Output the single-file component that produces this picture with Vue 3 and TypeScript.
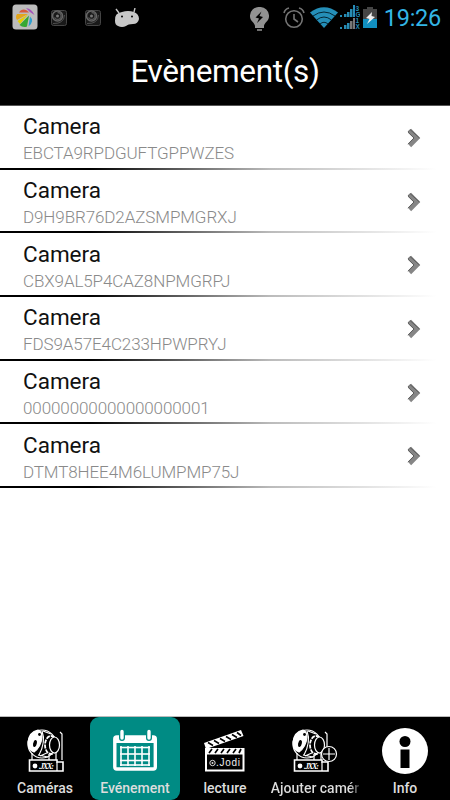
<script setup lang="ts">
interface CameraEvent {
  name: string
  uid: string
}

const events: CameraEvent[] = [
  { name: 'Camera', uid: 'EBCTA9RPDGUFTGPPWZES' },
  { name: 'Camera', uid: 'D9H9BR76D2AZSMPMGRXJ' },
  { name: 'Camera', uid: 'CBX9AL5P4CAZ8NPMGRPJ' },
  { name: 'Camera', uid: 'FDS9A57E4C233HPWPRYJ' },
  { name: 'Camera', uid: '00000000000000000001' },
  { name: 'Camera', uid: 'DTMT8HEE4M6LUMPMP75J' },
]

const tabs = [
  { id: 'cameras', label: 'Caméras' },
  { id: 'events', label: 'Evénement' },
  { id: 'playback', label: 'lecture' },
  { id: 'add', label: 'Ajouter camér' },
  { id: 'info', label: 'Info' },
]
const activeTab = 'events'
const gridX = [14, 21, 28, 35, 42]
const gridY = [22.5, 29, 35.5, 40]
</script>

<template>
  <div class="screen">
    <header class="status">
      <div class="notifications">
        <svg class="app" width="26" height="26" viewBox="0 0 26 26">
          <rect x=".5" y=".5" width="25" height="25" rx="3.5" fill="#bcbcbc" />
          <path d="M7 8.5C9 4.5 14 4.5 17 8.5Z" fill="#d85b3c" />
          <path d="M14 4Q20 5 22.500 11Q18 9 14 4Z" fill="#a453b8" />
          <path d="M5 10H16L5 16Q3 13 5 10Z" fill="#e3a51b" />
          <path d="M5.500 17L16 10.500L8 20Z" fill="#e5d000" />
          <path d="M7.500 21L17 11.500L15 22.500Q11 24 7.500 21Z" fill="#35a832" />
          <path d="M18 12.500Q23 17 16.500 22.500Z" fill="#2f9fd0" />
        </svg>
        <svg v-for="n in 2" :key="n" class="cam-note" width="18" height="18" viewBox="0 0 18 18">
          <rect x="1.5" y="1.5" width="15" height="15" rx="2" fill="#191919" stroke="#444" />
          <circle cx="7.500" cy="7" r="5" fill="none" stroke="#666" stroke-width="1.6" />
          <path d="M7.500 3.500A3.500 3.500 0 1 1 4.500 8.500" fill="none" stroke="#555" stroke-width="1.4" />
          <circle cx="7.500" cy="7" r="1.500" fill="#777" />
          <path d="M3 14.500Q14 15 14.500 6" fill="none" stroke="#505050" />
        </svg>
        <svg class="droid" width="26" height="20" viewBox="0 0 26 20">
          <path d="M5 5L2 1M20 4L21 0" stroke="#c7c7c7" stroke-width="1.4" />
          <path d="M1 13Q0 5 8 4Q14 2 20 4Q25 6 25 11Q24 16 19 16Q14 16 12 18Q8 20 4 18Q1 17 1 13Z" fill="#c7c7c7" />
          <circle cx="8" cy="8.500" r="1" /><circle cx="18" cy="8.500" r="1" />
        </svg>
      </div>
      <div class="indicators">
        <svg width="19" height="25" viewBox="0 0 19 25">
          <path d="M9.5 0A9 9 0 0 1 19 9.5C19 14 14 16 14 19V21H5V19C5 16 0 14 0 9.5A9 9 0 0 1 9.5 0Z" fill="#929292" />
          <path d="M11.500 4.500L5.500 10.500L9 11.500L7 16L13 10L9.500 9Z" fill="#000" />
          <path d="M7 23H12" stroke="#bbb" stroke-width="1.2" />
        </svg>
        <svg class="alarm" width="22" height="22" viewBox="0 0 22 22" fill="none" stroke="#747474" stroke-width="1.6">
          <circle cx="11" cy="12" r="8.3" /><path d="M11 7V12L15 15M1 6Q2 2 6 1M16 1Q20 2 21 6" />
        </svg>
        <svg class="wifi" width="28" height="22" viewBox="0 0 28 22">
          <path d="M0 5.5Q14-5 28 5.5L14 21Z" fill="#258fb8" />
          <path d="M3 9Q14 1 25 9M6.5 13Q14 7 21.5 13M10 17Q14 13.5 18 17" fill="none" stroke="#001a25" stroke-width=".9" />
        </svg>
        <svg class="signal" width="20" height="25" viewBox="0 0 20 25">
          <g fill="#278cb4">
            <path d="M0 10h2v2H0zM4 9h2.500v3H4zM7 7h2.500v5H7zM10 4h2.500v8H10zM13 0h2v12h-2zM0 22h2v2H0zM4 20h2.500v4H4zM7 18h2.500v6H7z" />
          </g>
          <path d="M10 16h2.500v8H10zM13 13h2v11h-2z" fill="#777" />
          <g class="net"><text x="15.500" y="6">3</text><text x="15.500" y="12">G</text><text x="15.500" y="18">1</text><text x="15.500" y="24">X</text></g>
        </svg>
        <svg class="battery" width="14" height="21" viewBox="0 0 14 21">
          <path d="M4 0h6v2h4v10H0V2h4z" fill="#454545" /><path d="M0 12h14v9H0z" fill="#118fc0" />
          <path d="M9 5L3 11L6.5 12L4 17L12 10L8.5 9Z" fill="#eee" />
        </svg>
        <span class="clock">19:26</span>
      </div>
    </header>
    <h1 class="title"><span>Evènement(s)</span></h1>
    <main class="list">
      <article v-for="event in events" :key="event.uid" class="row">
        <div class="copy">
          <div class="name">{{ event.name }}</div>
          <div class="uid">{{ event.uid }}</div>
        </div>
        <svg class="chevron" width="14" height="20" viewBox="0 0 14 20" fill="none">
          <path d="M2.500 2.500L10 10L2.500 17.500" stroke="#868686" stroke-width="4.6" />
          <path d="M1 4.200L7 10L1 16.200M1 4L3 1.500L12.500 10" stroke="#555" stroke-width=".9" />
        </svg>
      </article>
    </main>
    <nav class="tabs">
      <button v-for="tab in tabs" :key="tab.id" class="tab" :class="{ active: tab.id === activeTab }">
        <svg class="icon" :class="'icon-' + tab.id" width="56" height="50" viewBox="0 0 56 50" fill="none">
          <g v-if="tab.id === 'cameras' || tab.id === 'add'" stroke="#fff" stroke-width="1.2">
            <circle cx="25" cy="19" r="14" />
            <path d="M21 5Q12 7 11 17Q11 25 17 27Q24 22 25 12Q25 6 21 5Z" fill="#fff" />
            <ellipse cx="18" cy="18.500" rx="1.8" ry="3.500" fill="#000" stroke="none" transform="rotate(12 18 18.500)" />
            <circle cx="22.500" cy="9.500" r="1.4" fill="#000" stroke="none" />
            <path d="M25 6Q29 17 22 30M15 28V35M21 30L31 32M26 6L34 9M23 31L32 27" />
            <ellipse cx="34" cy="20" rx="6" ry="9" fill="#000" stroke-width="1.8" stroke-dasharray="4 1" />
            <ellipse cx="37.500" cy="20" rx="5" ry="8" fill="#000" />
            <path d="M43 7L45 9V35M32 29V35M39 28V35" />
            <path d="M12.500 35H40V37H46V46H12.500Z" fill="#000" stroke-width="1.6" />
            <path d="M40 37V46" />
            <circle cx="18" cy="41" r="2.4" fill="#fff" stroke="none" />
            <text x="22" y="43.500" class="jx" textLength="15">.JXX:</text>
          </g>
          <g v-if="tab.id === 'add'" stroke="#fff" stroke-width="1.2">
            <circle cx="47" cy="29" r="7.5" fill="#000" /><path d="M41 29H53M47 23V35" />
          </g>
          <g v-if="tab.id === 'events'" stroke="#fff">
            <rect x="7.8" y="12" width="40.500" height="32" rx="2" stroke-width="3.4" />
            <path d="M8 14.500H48" stroke-width="7" />
            <path d="M15 7V13M42 7V13" stroke="#008b84" stroke-width="6" stroke-linecap="round" />
            <path d="M15 6.500V13M42 6.500V13" stroke-width="3.4" stroke-linecap="round" />
            <path v-for="x in gridX" :key="'x' + x" :d="`M${x} 21V41`" stroke-width="1.6" />
            <path v-for="y in gridY" :key="'y' + y" :d="`M13 ${y}H43`" stroke-width="1.6" />
          </g>
          <g v-if="tab.id === 'playback'">
            <path d="M7 18L44 5L46.500 11L9 24Z" fill="#fff" />
            <path d="M11 17.500L16 20.500M17 15.500L22 18.500M23 13.500L28 16.500M29 11.500L34 14.500M35 9.500L40 12.500M40 7.500L44 10.500" stroke="#000" stroke-width="1.6" />
            <path d="M9 24H46.500V45.500H9Z" stroke="#fff" stroke-width="2" />
            <path d="M9 24H46V29.500H9Z" fill="#fff" />
            <path d="M15 24L12 28M21 24L18 28M27 24L24 28M33 24L30 28M39 24L36 28M44 24L42 28" stroke="#000" stroke-width="1.7" />
            <circle cx="15.5" cy="38" r="2.7" stroke="#ddd" stroke-width="1" />
            <circle cx="15.500" cy="38" r="1" fill="#ddd" />
            <text x="19" y="40.8" class="brand" textLength="24">.Jodi</text>
          </g>
          <g v-if="tab.id === 'info'">
            <circle cx="28" cy="26" r="23" fill="#fff" />
            <circle cx="28" cy="16.5" r="5.5" fill="#000" /><path d="M23.5 24.5h9V43h-9z" fill="#000" />
          </g>
        </svg>
        <span class="label" :class="{ clipped: tab.id === 'add' }">{{ tab.label }}</span>
      </button>
    </nav>
  </div>
</template>

<style>
body { margin: 0; }
</style>
<style scoped>
.screen { width: 450px; height: 800px; display: flex; flex-direction: column; overflow: hidden; background: #fff; font-family: Roboto, "Liberation Sans", sans-serif; }
svg { display: block; flex: none; }
.status { height: 37px; background: #000; display: flex; justify-content: space-between; flex: none; }
.notifications { display: flex; padding: 4px 0 0 12px; height: 26px; }
.cam-note { margin: 5px 0 0 12px; }
.cam-note + .cam-note { margin-left: 16px; }
.droid { margin: 4px 0 0 12px; }
.indicators { display: flex; padding: 7px 9px 0 0; height: 25px; }
.alarm { margin: 0 0 0 14px; }
.wifi { margin-left: 5px; }
.signal { margin: -2px 0 0 2px; }
.net { font: bold 6.5px "Liberation Sans", sans-serif; fill: #278cb4; }
.battery { margin-left: 3px; }
.clock { color: #33b5e5; font-size: 23.5px; line-height: 23px; margin-left: 7px; letter-spacing: -.25px; }
.title { margin: 0; height: 69px; flex: none; background: #000; color: #fff; font-size: 31.5px; font-weight: 400; line-height: 70px; letter-spacing: -.35px; text-align: center; border-bottom: 1px solid #555; box-sizing: border-box; }
.list { flex: 1; display: flex; flex-direction: column; }
.row { height: 63.7px; flex: none; box-sizing: border-box; display: flex; justify-content: space-between; align-items: center; padding: 0 29px 0 23px; background: linear-gradient(90deg, #000 0, #000 20%, #bbb 60%, #fff 97%) bottom / 100% 2px no-repeat; }
.name { font-size: 22.5px; line-height: 26px; color: #111; }
.uid { font-size: 17px; line-height: 22px; margin-top: 3px; color: #8a8a8a; font-weight: 300; letter-spacing: -.1px; }
.copy { padding-top: 2px; }
.tabs { height: 84px; flex: none; display: grid; grid-template-columns: repeat(5, 1fr); background: #000; border-top: 1px solid #bbb; box-sizing: border-box; }
.tab { border: 0; padding: 8px 0 0; margin: 0; min-width: 0; background: none; height: 83px; color: #ddd; font-family: inherit; display: flex; flex-direction: column; align-items: center; border-radius: 9px; }
.active { background: #008b84; }
.icon-add { margin-right: 10px; }
.label { font-size: 14px; line-height: 18px; margin-top: 4px; font-weight: 500; white-space: nowrap; }
.clipped { background: linear-gradient(90deg, #ddd 90%, #333); background-clip: text; color: transparent; }
.jx { font: italic bold 8px "Liberation Serif", serif; fill: #fff; stroke: none; }
.brand { font: 10px "Liberation Sans", sans-serif; fill: #eee; }
</style>
